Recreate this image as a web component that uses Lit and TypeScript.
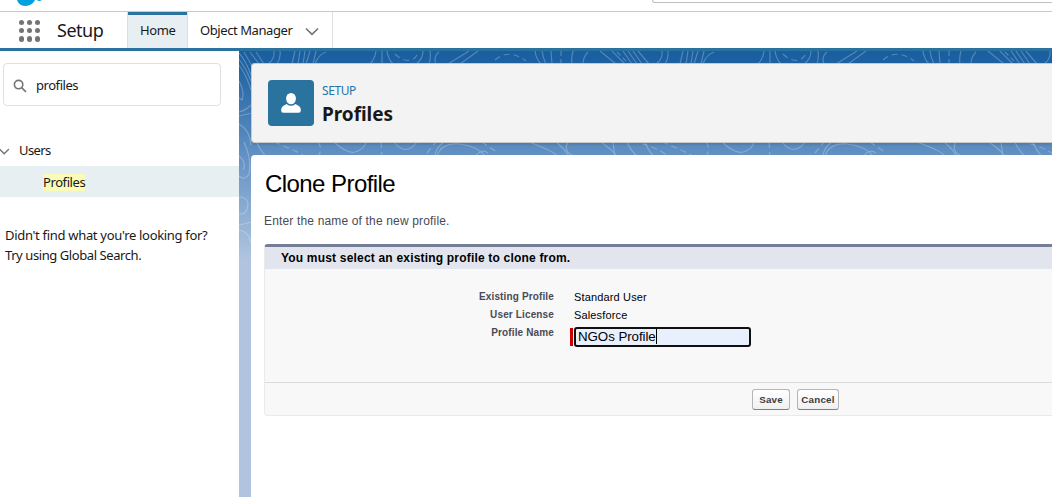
import { LitElement, html, css, svg } from "lit";
import { customElement } from "lit/decorators.js";

/* One tile of the contour-line pattern; tiles repeat every 388px. */
const TILE = svg`
  <path d="M35 0 Q36 8 29 13 M41 0 Q42 7 38 13 M56 0 L53 13 M61 0 L59 13 M66 0 L64 13 M71 0 L67 13 M77 0 L74 13 M87 1 Q79 4 76 13"/>
  <path d="M137 0 Q136 8 131 13 M143 0 V13 M148 0 Q149 8 154 13 M184 0 Q184 8 177 13 M191 0 Q192 8 190 13 M200 1 Q194 6 197 13 M230 0 L209 13 M239 0 L221 13"/>
  <path d="M156 3 Q164 11 173 9 Q178 6 179 1" stroke-dasharray="6 4"/>
  <path d="M256 9 Q270 -3 287 10" stroke-dasharray="6 4"/>
  <path d="M296 0 Q297 8 302 13 M303 0 Q304 7 307 13 M312 0 L313 13 M334 0 Q332 7 333 13 M349 1 Q344 6 344 13 M361 0 L377 13 M373 0 L386 13 M384 0 L393 13 M389 0 L398 13 M394 0 L403 13 M399 0 L410 13"/>
  <path d="M322 0 V13 M378 1 L390 13" stroke-dasharray="5 3"/>
  <path d="M17 90 Q21 99 27 106 M95 91 Q108 103 116 101 Q126 98 127 91 M155 91 Q167 106 178 91 M198 106 Q201 92 220 93 Q239 95 247 106 M236 106 Q242 97 249 102 M205 91 Q196 97 196 106 M290 91 Q317 101 319 106 M317 91 Q326 98 330 106 M329 91 Q323 101 337 106 M362 91 Q376 101 378 106 M374 91 L376 106 M388 91 Q391 99 399 106"/>
  <path d="M35 91 Q51 97 64 104 M79 91 Q84 98 79 106 M142 91 L143 106 M188 102 L197 91 M243 91 L259 102 M403 93 Q414 95 428 104" stroke-dasharray="6 4"/>
`;

@customElement("contour-backdrop")
export class ContourBackdrop extends LitElement {
  static styles = css`
    :host { display: block; position: absolute; inset: 0; overflow: hidden;
      background: linear-gradient(to bottom, #195e9f 0, #1d61a1 12px, #5c8dc0 96px, #b0c4df 208px); }
    .lines { display: block; fill: none; stroke: #fff; stroke-opacity: .25; stroke-width: 1.2; }
  `;
  render() {
    return html`<svg class="lines" width="813" height="230" viewBox="0 0 813 230">
      ${[0, 388, 776].map((x) => svg`<g transform="translate(${x} 0)">${TILE}</g>`)}
      <path d="M0 2 Q7 10 12 24 M0 8 Q8 19 12 30 M0 14 Q8 25 12 39 M5 1 L13 15 M11 1 L20 13 M17 1 L25 13 M0 30 Q6 42 3 49 L0 47 M0 61 Q8 59 13 53 M0 65 L13 62 M0 73 Q11 79 12 94 M5 91 Q13 109 10 123 Q6 130 0 125 M0 105 Q8 112 4 119 M0 146 Q9 146 9 154 Q8 164 0 163 M0 174 L13 171 M0 179 Q10 181 12 192"/>
    </svg>`;
  }
}

@customElement("app-root")
export class AppRoot extends LitElement {
  static styles = css`
    * { box-sizing: border-box; }
    :host { display: flex; flex-direction: column; width: 1052px; height: 497px; overflow: hidden;
      background: #fff; color: #181818; font: 13px/20px "Noto Sans", "Open Sans", sans-serif; }
    svg { display: block; flex: none; }
    .top { display: flex; justify-content: space-between; height: 12px; flex: none;
      border-bottom: 1px solid #c9c9c9; padding-left: 15px; }
    .find { width: 400px; height: 3px; border: 1px solid #c0c0c0; border-top: 0; border-right: 0; border-bottom-left-radius: 3px; }
    .nav { display: flex; height: 39px; flex: none; border-bottom: 3px solid #2a739e; padding-left: 18px; }
    .dots { display: grid; grid-template-columns: repeat(3, 5.4px); gap: 2.7px; align-content: start; padding-top: 8px; width: 39px; margin-left: .5px; margin-right: -.5px; }
    .dot { width: 5.4px; height: 5.4px; border-radius: 50%; background: #747474; }
    .name { width: 70px; font-size: 18px; line-height: 37px; letter-spacing: -.5px; white-space: nowrap; }
    .tab { height: 36px; line-height: 37px; white-space: nowrap; letter-spacing: -.42px; }
    .home { width: 61px; padding: 0 0 0 12px; background: #e8eff2; border: 1px solid #dcdfe1; border-width: 0 1px;
      box-shadow: inset 0 3px #2a739e; }
    .objects { display: flex; width: 145px; padding-left: 12px; border-right: 1px solid #e0e0e0; }
    .objects .label { width: 105px; }
    .objects svg { margin-top: 15px; }
    .body { display: flex; flex: 1; min-height: 0; }
    .side { width: 239px; flex: none; }
    .search { display: flex; align-items: center; width: 218px; height: 43px; margin: 12px 0 0 3px; padding-left: 9px;
      border: 1px solid #e0e0e0; border-radius: 4px; letter-spacing: -.45px; }
    .search svg { margin: 3px 9px 0 0; }
    .group { display: flex; align-items: center; height: 20px; margin-top: 34px; letter-spacing: -.6px; }
    .group svg { margin: 3px 9px 0 -1px; }
    .item { height: 31px; margin-top: 6px; padding: 6px 0 0 43px; background: #e8eff2; line-height: 20px; letter-spacing: -.42px; }
    .mark { background: #fbfbb8; line-height: 16px; display: inline-block; height: 17px; }
    .hint { padding: 28px 0 0 5px; white-space: nowrap; }
    .ask { letter-spacing: -.31px; }
    .try { letter-spacing: -.42px; }
    .main { position: relative; flex: 1; min-width: 0; }
    .stack { position: relative; display: flex; flex-direction: column; height: 100%; padding: 12px 0 0 12px; gap: 12px; }
    .head { display: flex; height: 80px; flex: none; padding: 16px; background: #f3f3f3; border: 1px solid #c9c9c9;
      border-right: 0; border-radius: 4px 0 0 4px; box-shadow: 0 2px 2px rgba(0,0,0,.1); }
    .badge { display: flex; width: 46px; height: 46px; border-radius: 4px; background: #2a739e; margin-right: 8px; }
    .over { font-size: 12px; line-height: 21px; color: #2574a9; letter-spacing: -.4px; }
    .title { font-size: 19px; font-weight: 700; line-height: 26px; letter-spacing: -.05px; }
    .page { flex: 1; background: #fff; border-top-left-radius: 4px; padding-left: 13px; font-family: "Liberation Sans", Arial, sans-serif; color: #000; }
    .h { font-size: 24px; line-height: 28px; padding: 15px 0 0 1px; letter-spacing: -.56px; }
    .lead { font-size: 12px; line-height: 16px; margin-top: 15px; color: #4a4a56; letter-spacing: .16px; }
    .block { height: 172px; margin-top: 15px; background: #f8f8f8; border: 1px solid #eaeaea; border-right: 0;
      border-top: 3px solid #747e96; border-radius: 4px 0 0 4px; display: flex; flex-direction: column; }
    .bar { height: 22px; background: #e3e5ee; padding-left: 16px; font-size: 12px; font-weight: 700; line-height: 23px; letter-spacing: .19px; }
    .form { display: grid; grid-template-columns: 289px 177px; grid-template-rows: 18px 18px 22px; column-gap: 20px;
      padding-top: 19px; height: 114px; border-bottom: 1px solid #dbdbdb; }
    .key { text-align: right; font-size: 10px; font-weight: 700; line-height: 18px; color: #4a4a56; letter-spacing: .14px; }
    .val { font-size: 11px; line-height: 19px; letter-spacing: .15px; }
    .req { display: flex; margin-left: -4px; width: 181px; }
    .flag { width: 3px; height: 18px; margin: 4px 1px 0 0; background: #c00; }
    .input { display: flex; width: 177px; height: 20px; margin-top: 3px; border: 2px solid #101010; border-radius: 3px; background: #e8f0fe;
      padding-left: 2px; font-size: 13.33px; line-height: 15px; white-space: nowrap; letter-spacing: -.07px; }
    .caret { width: 1px; height: 15px; background: #000; }
    .acts { display: flex; gap: 7px; padding: 6px 0 0 487px; }
    .btn { height: 21px; border: 1px solid #b5b5b5; border-bottom-color: #7f7f7f; border-radius: 3px; text-align: center;
      background: linear-gradient(#fff, #f0f0f0); color: #3c3c3c; font: 700 9.8px/20px "Liberation Sans", Arial, sans-serif; padding: 0; letter-spacing: .2px; }
    .save { width: 38px; }
    .cancel { width: 42px; }
  `;
  render() {
    return html`
      <div class="top">
        <svg width="34" height="8" viewBox="0 0 34 8"><path fill="#00a1e0" d="M2 0 Q4 6 11 6 Q18 5 20 0 Z M22 0 H27 Q24 1.8 22 0 Z"/></svg>
        <div class="find"></div>
      </div>
      <div class="nav">
        <div class="dots">${Array.from({ length: 9 }, () => html`<i class="dot"></i>`)}</div>
        <div class="name">Setup</div>
        <div class="tab home">Home</div>
        <div class="tab objects"><span class="label">Object Manager</span>
          <svg width="14" height="10" viewBox="0 0 14 10"><path d="M1.5 2 L7 7.3 L12.5 2" fill="none" stroke="#747474" stroke-width="1.7" stroke-linecap="round"/></svg>
        </div>
      </div>
      <div class="body">
        <div class="side">
          <div class="search">
            <svg width="14" height="14" viewBox="0 0 14 14"><g fill="none" stroke="#747474" stroke-width="1.6"><circle cx="5.6" cy="5.6" r="4.2"/><path d="M8.8 8.8 L13 12.8"/></g></svg>
            <span>profiles</span>
          </div>
          <div class="group">
            <svg width="11" height="8" viewBox="0 0 11 8"><path d="M1 1.5 L5.2 5.7 L9.5 1.5" fill="none" stroke="#747474" stroke-width="1.4" stroke-linecap="round"/></svg>
            <span>Users</span>
          </div>
          <div class="item"><span class="mark">Profiles</span></div>
          <div class="hint"><div class="ask">Didn't find what you're looking for?</div><div class="try">Try using Global Search.</div></div>
        </div>
        <div class="main">
          <contour-backdrop></contour-backdrop>
          <div class="stack">
            <div class="head">
              <div class="badge"><svg width="46" height="46" viewBox="0 0 46 46"><g fill="#fff"><ellipse cx="23" cy="18.6" rx="4.9" ry="5.7"/><path d="M18.6 23.9 Q23 27.6 27.4 23.9 L30.9 25.9 Q32.9 27.2 32.9 30.2 Q32.9 32.7 30.6 32.7 H15.4 Q13.1 32.7 13.1 30.2 Q13.1 27.2 15.1 25.9 Z"/></g></svg></div>
              <div><div class="over">SETUP</div><div class="title">Profiles</div></div>
            </div>
            <div class="page">
              <div class="h">Clone Profile</div>
              <div class="lead">Enter the name of the new profile.</div>
              <div class="block">
                <div class="bar">You must select an existing profile to clone from.</div>
                <div class="form">
                  <div class="key">Existing Profile</div><div class="val">Standard User</div>
                  <div class="key">User License</div><div class="val">Salesforce</div>
                  <div class="key">Profile Name</div>
                  <div class="req"><i class="flag"></i><div class="input">NGOs Profile<i class="caret"></i></div></div>
                </div>
                <div class="acts"><button class="btn save">Save</button><button class="btn cancel">Cancel</button></div>
              </div>
            </div>
          </div>
        </div>
      </div>`;
  }
}
